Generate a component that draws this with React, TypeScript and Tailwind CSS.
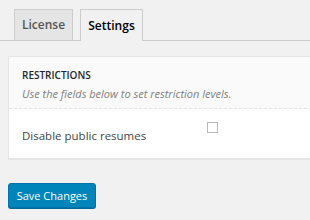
export default function App() {
  return (
    <div className="w-[310px] h-[220px] overflow-hidden bg-[#f1f1f1] font-['Open_Sans',sans-serif] text-[#23282d]">
      {/* tabs */}
      <div className="flex items-end h-[41px] border-b border-[#cccccc] pl-[14px] gap-[7px]">
        <div className="h-[31px] w-[59px] flex items-center justify-center bg-[#e5e5e5] border border-b-0 border-[#cccccc] text-[12px] font-semibold text-[#555555]">
          License
        </div>
        <div className="h-[32px] w-[63px] -mb-px flex items-center justify-center bg-[#f1f1f1] border border-b-0 border-[#cccccc] text-[12px] font-semibold text-[#000000]">
          Settings
        </div>
      </div>

      {/* panel */}
      <div className="mt-[15px] ml-[8px] w-[320px] bg-white border border-[#e5e5e5] shadow-[0_1px_1px_rgba(0,0,0,0.04)]">
        <div className="bg-[#fafafa] border-b border-dashed border-[#e5e5e5] pl-[13px] pt-[11px] h-[52px]">
          <div className="text-[10px] font-semibold uppercase leading-[14px] text-[#23282d]">Restrictions</div>
          <div className="mt-[5px] text-[11px] italic leading-[14px] text-[#808080]">
            Use the fields below to set restriction levels.
          </div>
        </div>
        <div className="flex items-center h-[49px] pl-[13px]">
          <div className="w-[185px] text-[11.5px] text-[#444444] pt-[5px]">Disable public resumes</div>
          <div className="w-[11px] h-[11px] border border-[#b4b9be] bg-white -mt-[12px]" />
        </div>
      </div>

      {/* button */}
      <div className="mt-[23px] ml-[8px]">
        <button className="h-[25px] w-[88px] rounded-[3px] bg-[#0085ba] border border-[#0073aa] text-white text-[11px] leading-none shadow-[0_1px_0_#006799]">
          Save Changes
        </button>
      </div>
    </div>
  );
}
